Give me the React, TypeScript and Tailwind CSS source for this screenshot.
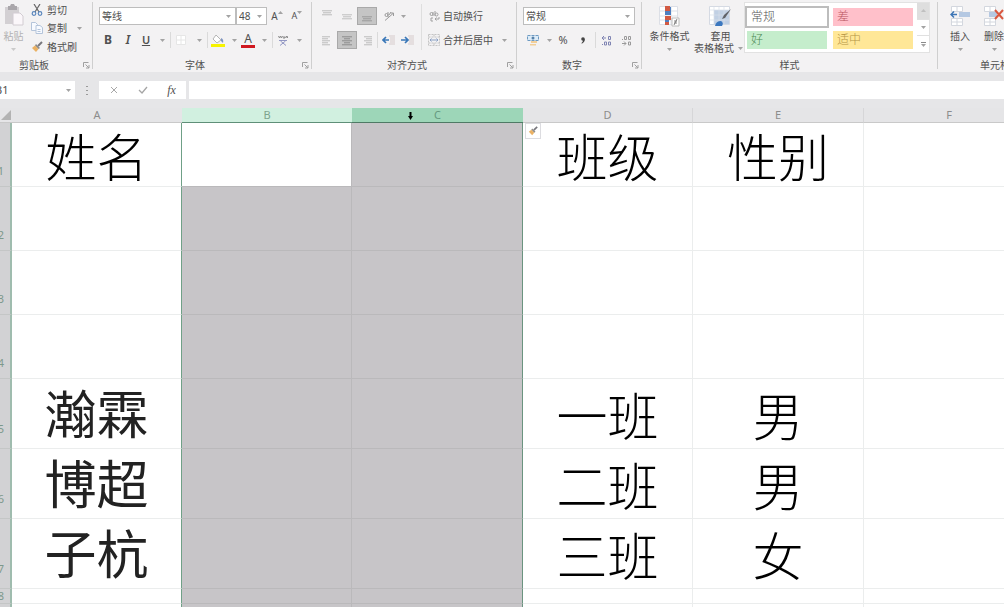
import type { ReactNode } from "react";
import clsx from "clsx";

const Caret = ({ className = "" }: { className?: string }) => (
  <svg viewBox="0 0 5 3" className={clsx("h-[3px] w-[5px] shrink-0 fill-[#a3a3a3]", className)}>
    <path d="M0 0h5L2.5 3z" />
  </svg>
);

const Launcher = () => (
  <svg viewBox="0 0 8 8" className="size-2" fill="none" stroke="#a0a0a0">
    <path d="M1.500 6V1.500h5M3.500 3.500L7 7M7 4v3H4" />
  </svg>
);

const Tool = ({ label, className = "w-5", pressed, children }: {
  label: string;
  className?: string;
  pressed?: boolean;
  children: ReactNode;
}) => (
  <button
    type="button"
    aria-label={label}
    aria-pressed={pressed}
    className={clsx(
      "flex h-[18px] shrink-0 items-center justify-center",
      className,
      pressed && "border border-[#a9a9a9] bg-[#c5c5c5]"
    )}
  >
    {children}
  </button>
);

const Sep = () => <span className="h-4 w-px shrink-0 bg-[#dadada]" />;

const Group = ({ title, className, launcher = true, children }: {
  title: string;
  className: string;
  launcher?: boolean;
  children: ReactNode;
}) => (
  <section className={clsx("flex h-[72px] shrink-0 flex-col", className)}>
    <div className="h-[58px]">{children}</div>
    <div className={clsx("flex h-3.5 items-center", launcher && "pr-0.5")}>
      <h2 className={clsx("flex-1 text-center text-[10px] leading-3", launcher && "pr-1")}>{title}</h2>
      {launcher && (
        <button type="button" aria-label={title + "设置"} className="w-2">
          <Launcher />
        </button>
      )}
    </div>
  </section>
);

const Divider = () => <span className="mt-0.5 h-[67px] w-px shrink-0 bg-[#cfcfcf]" />;

const Combo = ({ label, value, className }: { label: string; value: string; className: string }) => (
  <label className={clsx("flex h-[18px] items-center border border-[#bdbdbd] bg-white pr-1", className)}>
    <select aria-label={label} className="min-w-0 flex-1 appearance-none pl-0.5 text-[10px] leading-4 outline-none">
      <option>{value}</option>
    </select>
    <Caret className="pointer-events-none" />
  </label>
);

const Lines = ({ widths, y = 0, align = "center", color = "#b4b4b4" }: {
  widths: number[];
  y?: number;
  align?: "left" | "center" | "right";
  color?: string;
}) => (
  <svg viewBox="0 0 10 12" className="h-3 w-2.5" fill={color}>
    {widths.map((w, i) => (
      <rect
        key={i}
        x={align === "left" ? 0 : align === "right" ? 10 - w : (10 - w) / 2}
        y={y + i * 2}
        width={w}
        height="1.400"
      />
    ))}
  </svg>
);

const Brush = ({ className = "size-3" }: { className?: string }) => (
  <svg viewBox="0 0 12 12" className={className}>
    <path d="M11 1L7 5" stroke="#77777d" strokeWidth="2" />
    <path d="M5 3l4 4-1.500 1L4 4.500z" fill="#8a8a8a" />
    <path d="M4 4.500L7.500 8 5 11 1 7z" fill="#eab163" />
  </svg>
);

const Indent = ({ flip }: { flip?: boolean }) => (
  <svg viewBox="0 0 13 10" className="h-2.5 w-[13px]">
    <path d="M7 1h6M8 3h5M8 5h5M8 7h5M7 9h6" stroke="#d6cbcb" />
    <path d={flip ? "M0 5h6M4 2l3 3-3 3" : "M1 5h6M4 2L1 5l3 3"} stroke="#3a78b8" strokeWidth="1.700" fill="none" />
  </svg>
);

const Decimal = ({ increase }: { increase?: boolean }) => (
  <svg viewBox="0 0 11 11" className="size-[11px]" fill="none" stroke={increase ? "#8085b3" : "#9a9a9a"}>
    {increase ? (
      <path d="M1 3h4M3 1L1 3l2 2M7.500 1.500h2v3h-2zM1 9.500h1M3.500 7h2v3h-2zM7.500 7h2v3h-2z" />
    ) : (
      <path d="M1 4.500h1M3.500 1.500h2v3h-2zM7.500 1.500h2v3h-2zM1 8.500h4M3 6.500l2 2-2 2M7.500 7h2v3h-2z" />
    )}
  </svg>
);

const Clipboard = () => (
  <Group title="剪贴板" className="-ml-2.5 w-[102px]">
    <div className="flex pl-2.5">
      <button type="button" className="flex w-[27px] flex-col items-center pt-1 text-[10px] leading-3 text-[#b3b3b3]">
        <svg viewBox="0 0 20 22" className="h-[22px] w-5">
          <path d="M1 3h14v17H1z" fill="#d3d0d3" />
          <path d="M4 2h2l1-2h3l1 2h2v4H4z" fill="#aaa7ab" />
          <path d="M9 9h7l3 3v9H9z" fill="#fbf7fa" stroke="#d2ccd2" />
        </svg>
        <span className="mt-1">粘贴</span>
        <Caret className="mt-1.5 opacity-50" />
      </button>
      <div className="ml-1 flex flex-col text-[10px] leading-3">
        <button type="button" className="flex h-[19px] items-center gap-1">
          <svg viewBox="0 0 12 12" className="size-3" fill="none">
            <path d="M3 0l5 8M9 0L4 8" stroke="#666" strokeWidth="1.200" />
            <circle cx="3" cy="9.500" r="1.800" stroke="#5b87bd" strokeWidth="1.200" />
            <circle cx="9" cy="9.500" r="1.800" stroke="#5b87bd" strokeWidth="1.200" />
          </svg>
          剪切
        </button>
        <button type="button" className="flex h-[18px] items-center gap-1">
          <svg viewBox="0 0 12 12" className="size-3" fill="#f7faff" stroke="#b4c4da">
            <path d="M.5.500h4l2 2v6h-6z" />
            <path d="M5 3.500h4l2.500 2v6H5z" />
            <path d="M6.500 7.500h3M6.500 9.500h3" />
          </svg>
          复制
          <Caret className="ml-1.5" />
        </button>
        <button type="button" className="flex h-[19px] items-center gap-1">
          <Brush />
          格式刷
        </button>
      </div>
    </div>
  </Group>
);

const FontGroup = () => (
  <Group title="字体" className="w-[218px]">
    <div className="flex items-center pt-[7px] pl-1.5">
      <Combo label="字体" value="等线" className="w-[137px]" />
      <Combo label="字号" value="48" className="w-[31px]" />
      <Tool label="增大字号">
        <span className="text-[10px]">A</span>
        <Caret className="mb-2 w-[3px] rotate-180" />
      </Tool>
      <Tool label="减小字号">
        <span className="text-[9px]">A</span>
        <Caret className="mb-2 w-[3px]" />
      </Tool>
    </div>
    <div className="flex items-center pt-1.5 pl-[5px]">
      <Tool label="加粗"><b className="text-xs">B</b></Tool>
      <Tool label="倾斜"><i className="text-xs font-semibold">I</i></Tool>
      <Tool label="下划线" className="w-4"><span className="text-[11px] font-semibold underline">U</span></Tool>
      <Tool label="下划线选项" className="w-4"><Caret /></Tool>
      <Sep />
      <Tool label="边框">
        <svg viewBox="0 0 10 10" className="size-2.5" fill="#fff" stroke="#e6e6e6">
          <path d="M.5.500h9v9h-9zM5 .5v9M.5 5h9" />
        </svg>
      </Tool>
      <Tool label="边框选项" className="w-4"><Caret /></Tool>
      <Sep />
      <Tool label="填充颜色">
        <svg viewBox="0 0 14 13" className="h-[13px] w-3.5">
          <path d="M5 1l5 5-4 3-4-4z" fill="#fff" stroke="#b5b5b5" />
          <path d="M10 4q3 1 2 5l-2-2z" fill="#8097c4" />
          <path d="M0 10h14v3H0z" fill="#f6f300" />
        </svg>
      </Tool>
      <Tool label="填充颜色选项" className="w-3"><Caret /></Tool>
      <Tool label="字体颜色" className="w-4">
        <span className="h-[15px] border-b-3 border-[#d01820] px-[3px] text-xs leading-3">A</span>
      </Tool>
      <Tool label="字体颜色选项" className="w-4"><Caret /></Tool>
      <Sep />
      <Tool label="拼音">
        <svg viewBox="0 0 10 11" className="h-[11px] w-2.5" fill="none" stroke="#8a8a8a">
          <path d="M.5 1l1 2 1-2 1 2 1-2M5 2h2v1H5M8 3V1.500h1.500V3" />
          <path d="M1 5.500h8M2 10.500L7.500 6M2.500 6L8 10.500" stroke="#9297c4" />
        </svg>
      </Tool>
      <Tool label="拼音选项" className="w-3"><Caret /></Tool>
    </div>
  </Group>
);

const AlignGroup = () => (
  <Group title="对齐方式" className="w-[204px]">
    <div className="flex">
      <div className="w-[109px] pl-[5px]">
        <div className="flex items-center pt-[7px]">
          <Tool label="顶端对齐"><Lines widths={[10, 8, 10]} y={0} color="#cbcbcb" /></Tool>
          <Tool label="垂直居中"><Lines widths={[10, 8, 10]} y={4} color="#cecece" /></Tool>
          <Tool label="底端对齐" pressed><Lines widths={[10, 8, 10]} y={6} color="#a6a6a6" /></Tool>
          <Tool label="方向" className="ml-0.5 w-5">
            <svg viewBox="0 0 12 12" className="size-3" fill="none" stroke="#9a9a9a">
              <path d="M2 10.500L10 3.500M10.500 3v3M10.500 3H7.500" />
              <circle cx="3.500" cy="5" r="1.500" />
              <path d="M5 2v5M6 5l2-3" />
            </svg>
          </Tool>
          <Tool label="方向选项" className="w-2"><Caret /></Tool>
        </div>
        <div className="flex items-center pt-1.5">
          <Tool label="左对齐"><Lines widths={[8, 6, 8, 6, 8]} y={2} align="left" color="#cbcbcb" /></Tool>
          <Tool label="居中" pressed><Lines widths={[10, 6, 10, 6, 10]} y={2} color="#9c9c9c" /></Tool>
          <Tool label="右对齐"><Lines widths={[8, 6, 8, 6, 8]} y={2} align="right" color="#cbcbcb" /></Tool>
          <Sep />
          <Tool label="减少缩进量"><Indent /></Tool>
          <Tool label="增加缩进量" className="w-[18px]"><Indent flip /></Tool>
        </div>
      </div>
      <span className="mt-1 h-[46px] w-px bg-[#dedede]" />
      <div className="pt-[7px] pl-1.5 text-[10px] leading-3">
        <button type="button" className="flex h-[18px] items-center gap-[3px]">
          <svg viewBox="0 0 12 12" className="size-3" fill="none" stroke="#a0a0a0">
            <circle cx="3.500" cy="4" r="1.500" />
            <path d="M5 2v4M7 1v5" />
            <circle cx="8.500" cy="4.500" r="1.500" />
            <path d="M5 8H3v3h2M11 7v2H7M8.500 7.500L7 9l1.500 1.500" />
          </svg>
          自动换行
        </button>
        <button type="button" className="mt-1.5 flex h-[18px] items-center gap-[3px]">
          <svg viewBox="0 0 12 12" className="size-3" fill="none">
            <path d="M.5.500h11v11H.5zM6 .5V3M6 9v2.500M.5 3h11M.5 9h11" stroke="#c4c4c4" strokeDasharray="2 1" />
            <path d="M2 6h8M3.500 4.500L2 6l1.500 1.500M8.500 4.500L10 6 8.500 7.500" stroke="#8ba1c4" />
          </svg>
          合并后居中
          <Caret className="ml-1.5" />
        </button>
      </div>
    </div>
  </Group>
);

const NumberGroup = () => (
  <Group title="数字" className="w-[124px]">
    <div className="px-1.5 pt-[7px]">
      <Combo label="数字格式" value="常规" className="w-full" />
    </div>
    <div className="flex items-center pt-1.5 pl-1.5">
      <Tool label="会计数字格式">
        <svg viewBox="0 0 12 11" className="h-[11px] w-3">
          <path d="M.5.500h11v5H.5z" fill="#dcebf7" stroke="#6d9ac2" strokeDasharray="3 1" />
          <circle cx="6" cy="3" r="1.500" fill="#5882aa" />
          <path d="M4 6h6v2H4zM3 9h6v1.500H3z" fill="#f3cf98" />
        </svg>
      </Tool>
      <Tool label="会计格式选项" className="w-3"><Caret /></Tool>
      <Tool label="百分比样式" className="w-4"><span className="text-[11px]">%</span></Tool>
      <Tool label="千位分隔样式" className="w-6">
        <svg viewBox="0 0 4 7" className="h-[7px] w-1" fill="#444">
          <circle cx="2" cy="2" r="1.800" />
          <path d="M3.800 2Q4 5 .8 6.800L.5 6Q2 5 2 3z" />
        </svg>
      </Tool>
      <Sep />
      <Tool label="增加小数位数"><Decimal increase /></Tool>
      <Tool label="减少小数位数"><Decimal /></Tool>
    </div>
  </Group>
);

const cellStyles = [
  { name: "常规", look: "border-2 border-[#bdbdbd] bg-white text-[#555] h-[22px] w-[84px] -m-0.5 pl-1" },
  { name: "差", look: "bg-[#ffc0ca] text-[#b8545f] h-[18px] pl-1" },
  { name: "好", look: "bg-[#c5edcc] text-[#4f8a57] h-[18px] pl-1" },
  { name: "适中", look: "bg-[#ffe797] text-[#b59544] h-[18px] pl-1" },
];

const StyleGroup = () => (
  <Group title="样式" className="w-[295px]" launcher={false}>
    <div className="flex">
      <button type="button" className="flex w-[55px] flex-col items-center pt-1.5 text-[10px] leading-3">
        <svg viewBox="0 0 21 21" className="size-[21px]">
          <path d="M.5.500h18v18H.5zM.5 5h18M.5 10h18M.5 14h18M12 .5v18" fill="#fff" stroke="#dcdfe6" />
          <path d="M6 0h5v5H6zM6 10h6v4H6zM6 15h4v4H6z" fill="#d25a43" />
          <path d="M11 1h1v8H6V5h5z" fill="#4f7fc0" />
          <path d="M6 14h4v2H6z" fill="#4f7fc0" />
          <path d="M13 12h7v8h-7z" fill="#fff" stroke="#bbb" />
          <path d="M15 17h3M15 15h3M18 13l-3 6" stroke="#666" strokeWidth=".8" />
        </svg>
        <span className="mt-[3px]">条件格式</span>
        <Caret className="mt-1.5" />
      </button>
      <button type="button" className="flex w-[47px] flex-col items-center pt-1.5 text-[10px] leading-3">
        <svg viewBox="0 0 23 21" className="h-[21px] w-[23px]">
          <path d="M.5.500h20v18H.5z" fill="#fff" stroke="#d5dae3" />
          <path d="M5 4h15v14H5z" fill="#c1d0e4" />
          <path d="M.5 4h20M.5 9h20M.5 14h20M5 .5v18M10 .5v18M15 .5v18" stroke="#d9e0ea" strokeWidth=".7" />
          <path d="M22 3L16 12l-3 1 2-4z" fill="#606268" />
          <path d="M6 20q1-5 6-5 3 2 1 5z" fill="#3c78bf" />
        </svg>
        <span className="mt-[3px]">套用</span>
        <span className="flex items-center gap-1 whitespace-nowrap pr-1">
          表格格式
          <Caret />
        </span>
      </button>
      <div className="mt-0.5 flex h-[51px] border border-[#e2e2e2] bg-white">
        <div className="grid grid-cols-[80px_80px] content-start gap-x-1.5 gap-y-[5px] py-[5px] pr-1 pl-0.5">
          {cellStyles.map((s) => (
            <button
              key={s.name}
              type="button"
              className={clsx("flex items-center text-left text-xs leading-3 font-light", s.look)}
            >
              {s.name}
            </button>
          ))}
        </div>
        <div className="flex w-3 flex-col divide-y divide-[#e0e0e0]">
          <button type="button" aria-label="上一行" className="flex flex-1 items-center justify-center bg-[#dedede]">
            <Caret className="rotate-180 opacity-50" />
          </button>
          <button type="button" aria-label="下一行" className="flex flex-1 items-center justify-center">
            <Caret className="fill-[#777]" />
          </button>
          <button type="button" aria-label="其他样式" className="flex flex-1 flex-col items-center justify-center gap-px">
            <span className="h-px w-[5px] bg-[#8a8a8a]" />
            <Caret className="fill-[#777]" />
          </button>
        </div>
      </div>
    </div>
  </Group>
);

const CellGroup = () => (
  <Group title="单元格" className="w-[114px]" launcher={false}>
    <div className="flex pl-[5px] text-[10px] leading-3">
      <button type="button" className="flex w-[34px] flex-col items-center pt-1.5">
        <svg viewBox="0 0 20 20" className="size-5">
          <path d="M1.500.500h11v5h-11zM1.500 12.500h11v7h-11zM7 .5v5M7 12.500v7M1.500 16h11" fill="#fff" stroke="#d3d7de" />
          <path d="M9 6h11v5H9z" fill="#b4c8e2" />
          <path d="M1 8.500h6M4 5.500l-3 3 3 3" stroke="#3c75b5" strokeWidth="1.500" fill="none" />
        </svg>
        <span className="mt-1">插入</span>
        <Caret className="mt-1.5" />
      </button>
      <button type="button" className="flex w-[34px] flex-col items-center pt-1.5">
        <svg viewBox="0 0 20 20" className="size-5">
          <path d="M.5.500h11v5H.5zM.5 12.500h11v7H.5zM6 .5v5M6 12.500v7M.5 16h11" fill="#fff" stroke="#d3d7de" />
          <path d="M5 6h8v5H5z" fill="#b4c8e2" />
          <path d="M11 4l8 9M19 4l-8 9" stroke="#d9573f" strokeWidth="2" />
        </svg>
        <span className="mt-1">删除</span>
        <Caret className="mt-1.5" />
      </button>
    </div>
  </Group>
);

const FormulaBar = () => (
  <div className="flex h-9 items-center bg-[#e6e6e8] text-[11px]">
    <label className="-ml-1.5 flex h-[18px] w-[81px] items-center bg-white pr-1">
      <input aria-label="名称框" defaultValue="B1" className="min-w-0 flex-1 pl-px outline-none" />
      <Caret className="fill-[#777]" />
    </label>
    <svg viewBox="0 0 2 9" className="mx-[11px] h-[9px] w-0.5" fill="#9a9a9a">
      <path d="M0 0h2v1H0zM0 4h2v1H0zM0 8h2v1H0z" />
    </svg>
    <div className="flex h-[18px] w-[87px] items-center bg-white">
      <button type="button" aria-label="取消" className="flex w-[29px] justify-center">
        <svg viewBox="0 0 8 8" className="size-2" stroke="#a8a8a8"><path d="M1 1l6 6M7 1L1 7" /></svg>
      </button>
      <button type="button" aria-label="输入" className="flex w-[29px] justify-center">
        <svg viewBox="0 0 10 8" className="h-2 w-2.5" fill="none" stroke="#a5a5a5" strokeWidth="1.300"><path d="M1 4l3 3 5-6" /></svg>
      </button>
      <button type="button" aria-label="插入函数" className="w-[29px] font-['Liberation_Serif',serif] text-xs italic">fx</button>
    </div>
    <input aria-label="编辑栏" className="ml-[3px] h-[18px] min-w-0 flex-1 bg-white px-1 outline-none" />
  </div>
);

const columns = ["A", "B", "C", "D", "E", "F"];

const rows = [
  { height: "h-16", num: "pb-2", name: "姓名", grade: "班级", sex: "性别", head: true },
  { height: "h-16", num: "pb-2" },
  { height: "h-16", num: "pb-2" },
  { height: "h-16", num: "pb-2" },
  { height: "h-[70px]", num: "pb-3", name: "瀚霖", grade: "一班", sex: "男" },
  { height: "h-[70px]", num: "pb-3", name: "博超", grade: "二班", sex: "男" },
  { height: "h-[70px]", num: "pb-3", name: "子杭", grade: "三班", sex: "女" },
  { height: "h-[15px]", num: "pb-0" },
  { height: "h-[15px]", num: "pb-0" },
];

const cell = "border-r border-b p-0 text-center";
const plain = "border-[#ebeded]";
const thin = "text-[51px] leading-[56px] font-light text-black";

const Sheet = () => (
  <div className="-ml-3">
    <table className="w-full table-fixed border-separate border-spacing-0">
      <colgroup>
        <col className="w-6" />
        <col className="w-[170px]" />
        <col className="w-[170px]" />
        <col className="w-[171px]" />
        <col className="w-[170px]" />
        <col className="w-[171px]" />
        <col className="w-[170px]" />
      </colgroup>
      <thead>
        <tr className="h-[15px] bg-[#e5e5e7] text-[11px] leading-[14px] text-[#8c8c8c]">
          <td className="border-b border-[#c9c9c9] p-0">
            <svg viewBox="0 0 12 12" className="ml-auto size-3 fill-[#b3b3b3]"><path d="M11 1v10H1z" /></svg>
          </td>
          {columns.map((c) => (
            <th
              key={c}
              scope="col"
              className={clsx(
                "relative border-b p-0 font-normal",
                c === "B" && "border-[#5f8f78] bg-[#d1f0e0] text-[#7da38e]",
                c === "C" && "border-[#4f7a65] bg-[#9dd6b8] text-[#659a80]",
                c !== "B" && c !== "C" && "border-[#c9c9c9]",
                (c === "D" || c === "E") && "border-r border-r-[#d6d6d8]"
              )}
            >
              {c}
              {c === "C" && (
                <svg viewBox="0 0 5 8" className="absolute top-1 left-14 h-2 w-[5px]">
                  <path d="M1.500 0h2v4H5L2.500 8 0 4h1.500z" />
                </svg>
              )}
            </th>
          ))}
        </tr>
      </thead>
      <tbody>
        {rows.map((r, i) => (
          <tr key={i} className={r.height}>
            <th
              scope="row"
              className={clsx(
                "border-r-2 border-b border-b-[#c4c6c6] border-r-[#9fbcae] bg-[#d2d2d4] p-0 pl-1 align-bottom text-[11px] leading-[14px] font-normal text-[#7d988b]",
                r.num
              )}
            >
              {i + 1}
            </th>
            <td className={clsx(cell, "border-b-[#ebeded] border-r-[#6fa087]")}>
              {r.name && (
                <div className={r.head ? clsx(thin, "pt-1") : "text-[52px] leading-[56px] text-[#222]"}>{r.name}</div>
              )}
            </td>
            <td className={clsx(cell, "border-[#bab9bb]", i === 0 ? "bg-white" : "bg-[#c7c5c8]")} />
            <td className={clsx(cell, "border-b-[#bab9bb] border-r-[#6b9480] bg-[#c7c5c8]")} />
            <td className={clsx(cell, plain, "relative")}>
              {r.grade && <div className={clsx(thin, "pt-1")}>{r.grade}</div>}
              {i === 0 && (
                <button
                  type="button"
                  aria-label="格式刷选项"
                  className="absolute top-0 left-0.5 flex size-4 items-center justify-center border border-[#dcdce0] bg-white"
                >
                  <Brush className="size-2.5" />
                </button>
              )}
            </td>
            <td className={clsx(cell, plain)}>{r.sex && <div className={clsx(thin, "pt-1")}>{r.sex}</div>}</td>
            <td className={clsx(cell, plain)} />
          </tr>
        ))}
      </tbody>
    </table>
  </div>
);

export default function App() {
  return (
    <div className="h-screen overflow-hidden bg-white font-['Noto_Sans','Noto_Sans_CJK_SC',sans-serif] text-[#505050]">
      <header className="flex overflow-hidden bg-[#f3f2f3]">
        <Clipboard />
        <Divider />
        <FontGroup />
        <Divider />
        <AlignGroup />
        <Divider />
        <NumberGroup />
        <Divider />
        <StyleGroup />
        <Divider />
        <CellGroup />
      </header>
      <FormulaBar />
      <Sheet />
    </div>
  );
}
